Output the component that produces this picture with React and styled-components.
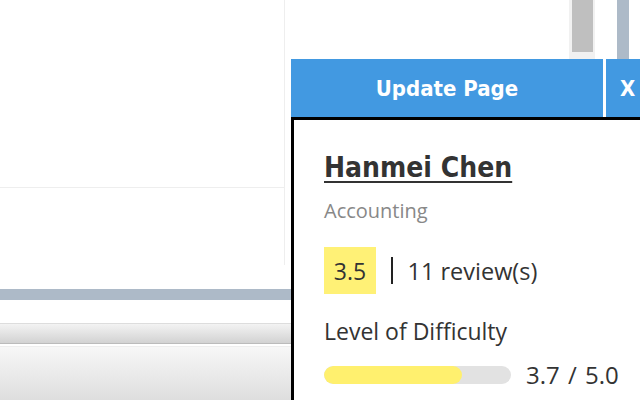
import React from 'react'
import styled, { createGlobalStyle } from 'styled-components'

const Global = createGlobalStyle`
  html, body {
    margin: 0;
    padding: 0;
    background: #fff;
    overflow: hidden;
  }
  body {
    font-family: "Open Sans", "Noto Sans", sans-serif;
  }
`

const Page = styled.div`
  width: 640px;
  height: 400px;
  display: flex;
  overflow: hidden;
`

const Left = styled.div`
  width: 291px;
  flex: none;
  display: flex;
  flex-direction: column;
`

const ListArea = styled.div`
  width: 284px;
  height: 265px;
  border-right: 1px solid #eeeeee;
  display: flex;
  flex-direction: column;
`

const ListRow = styled.div`
  height: ${({ h }) => h}px;
  flex: none;
  border-bottom: ${({ line }) => (line ? '1px solid #eeeeee' : 'none')};
`

const GreyBand = styled.div`
  margin-top: 24px;
  height: 11px;
  background: #adbac8;
`

const Toolbar = styled.div`
  margin-top: 23px;
  height: 19px;
  border-top: 1px solid #dddddd;
  border-bottom: 1px solid #bbbbbb;
  background: linear-gradient(#f3f3f3, #d2d2d2);
`

const Footer = styled.div`
  margin-top: 2px;
  flex: 1;
  border-top: 1px solid #eeeeee;
  background: linear-gradient(#f7f7f7, #dedede);
`

const Right = styled.div`
  flex: 1;
  display: flex;
  flex-direction: column;
  min-width: 0;
`

const TopStrip = styled.div`
  height: 59px;
  display: flex;
  flex: none;
`

const ScrollTrack = styled.div`
  margin-left: 278px;
  width: 26px;
  background: #f1f1f1;
  display: flex;
  justify-content: center;
`

const ScrollThumb = styled.div`
  width: 21px;
  height: 52px;
  background: #bfbfbf;
`

const SideBar = styled.div`
  margin-left: 22px;
  width: 12px;
  background: #adbac8;
`

const HeaderRow = styled.div`
  height: 58px;
  display: flex;
  flex: none;
  gap: 3px;
`

const HeaderButton = styled.button`
  border: none;
  margin: 0;
  padding: 0;
  background: #4299e1;
  color: #fff;
  font-family: "DejaVu Sans Condensed", "DejaVu Sans", sans-serif;
  font-stretch: condensed;
  font-weight: bold;
  font-size: 22px;
  width: ${({ w }) => (w ? `${w}px` : 'auto')};
  flex: ${({ grow }) => (grow ? 1 : 'none')};
  text-align: ${({ grow }) => (grow ? 'left' : 'center')};
  padding-left: ${({ grow }) => (grow ? '14px' : '0')};
`

const Panel = styled.div`
  flex: 1;
  border-top: 3px solid #000;
  border-left: 3px solid #000;
  padding: 30px 0 0 30px;
  color: #333;
`

const Name = styled.h2`
  margin: 0;
  font-family: "DejaVu Sans Condensed", "DejaVu Sans", sans-serif;
  font-stretch: condensed;
  font-weight: bold;
  font-size: 28px;
  line-height: 36px;
  color: #333;
  text-decoration: underline;
  text-decoration-thickness: 2px;
  text-underline-offset: 4px;
`

const Dept = styled.div`
  margin-top: 12px;
  font-size: 20px;
  line-height: 26px;
  color: #888;
`

const RatingRow = styled.div`
  margin-top: 23px;
  display: flex;
  align-items: center;
`

const Score = styled.div`
  width: 52px;
  height: 47px;
  background: #fff176;
  display: flex;
  align-items: center;
  justify-content: center;
  font-size: 23px;
  color: #333;
`

const Divider = styled.div`
  width: 1.5px;
  height: 27px;
  background: #222;
  margin: 0 15px;
`

const Reviews = styled.div`
  font-size: 23.5px;
  color: #333;
`

const Label = styled.div`
  margin-top: 22px;
  font-size: 23px;
  line-height: 30px;
  color: #333;
`

const BarRow = styled.div`
  margin-top: 12px;
  display: flex;
  align-items: center;
`

const Track = styled.div`
  width: 187px;
  height: 18px;
  border-radius: 9px;
  background: #e2e2e2;
  overflow: hidden;
`

const Fill = styled.div`
  height: 100%;
  background: #fff06e;
  border-radius: 9px;
`

const BarValue = styled.div`
  margin-left: 15px;
  font-size: 24px;
  word-spacing: 2px;
  color: #333;
`

export default function App() {
  const difficulty = 3.7
  return (
    <>
      <Global />
      <Page>
        <Left>
          <ListArea>
            <ListRow h={187} line />
          </ListArea>
          <GreyBand />
          <Toolbar />
          <Footer />
        </Left>
        <Right>
          <TopStrip>
            <ScrollTrack>
              <ScrollThumb />
            </ScrollTrack>
            <SideBar />
          </TopStrip>
          <HeaderRow>
            <HeaderButton w={312}>Update Page</HeaderButton>
            <HeaderButton grow>X</HeaderButton>
          </HeaderRow>
          <Panel>
            <Name>Hanmei Chen</Name>
            <Dept>Accounting</Dept>
            <RatingRow>
              <Score>3.5</Score>
              <Divider />
              <Reviews>11 review(s)</Reviews>
            </RatingRow>
            <Label>Level of Difficulty</Label>
            <BarRow>
              <Track>
                <Fill style={{ width: `${(difficulty / 5) * 100}%` }} />
              </Track>
              <BarValue>3.7 / 5.0</BarValue>
            </BarRow>
          </Panel>
        </Right>
      </Page>
    </>
  )
}
